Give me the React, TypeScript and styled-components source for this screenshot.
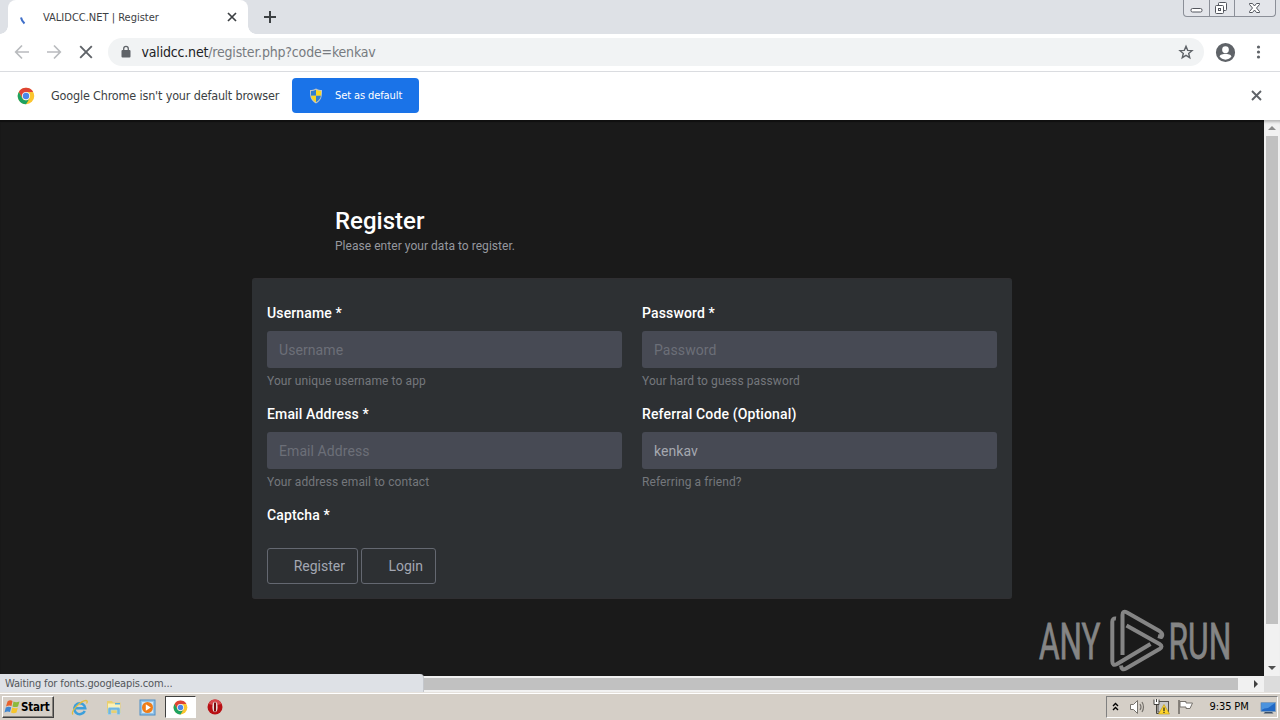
import React from "react";
import styled, { createGlobalStyle } from "styled-components";

const Global = createGlobalStyle`
  * { box-sizing: border-box; }
  html, body { margin: 0; padding: 0; }
  body { width: 1280px; height: 720px; overflow: hidden; background: #1a1a1a; }
  svg { display: block; flex: none; }
`;

const uiFont = `"DejaVu Sans Condensed", "DejaVu Sans", "Noto Sans", sans-serif`;

const Screen = styled.div`
  position: relative;
  display: flex;
  flex-direction: column;
  width: 1280px;
  height: 720px;
  overflow: hidden;
  font-family: "Noto Sans", sans-serif;
`;

/* Browser window */
const TabStrip = styled.div`
  display: flex;
  justify-content: space-between;
  height: 34px;
  padding-left: 8px;
  background: #dee1e6;
`;
const TabGroup = styled.div`
  display: flex;
  align-items: center;
`;
const Tab = styled.div`
  position: relative;
  display: flex;
  align-items: center;
  width: 240px;
  height: 34px;
  padding: 0 10px 0 12px;
  background: #fff;
  border-radius: 8px 8px 0 0;
  &::before, &::after {
    content: "";
    position: absolute;
    bottom: 0;
    width: 8px;
    height: 8px;
  }
  &::before { left: -8px; background: radial-gradient(circle at 0 0, #dee1e6 7.5px, #fff 8px); }
  &::after { right: -8px; background: radial-gradient(circle at 100% 0, #dee1e6 7.5px, #fff 8px); }
`;
const TabTitle = styled.span`
  flex: 1;
  margin-left: 7px;
  padding-top: 1px;
  font: 11px/16px ${uiFont};
  color: #3c4043;
  white-space: pre;
`;
const NewTab = styled.div`
  margin-left: 15px;
`;
const WindowButtons = styled.div`
  display: flex;
  width: 93px;
  height: 17px;
  margin-right: 4px;
  border: 1px solid #8b8f98;
  border-top: 0;
  border-radius: 0 0 4px 4px;
  background: #e3e5ea;
`;
const WindowButton = styled.div<{ $w: number }>`
  display: flex;
  justify-content: center;
  align-items: center;
  width: ${(p) => p.$w}px;
  & + & { border-left: 1px solid #8b8f98; }
`;
const Toolbar = styled.div`
  display: flex;
  align-items: center;
  height: 38px;
  padding: 0 13px 1px 14px;
  background: #fff;
  border-bottom: 1px solid #dadce0;
`;
const NavIcons = styled.div`
  display: flex;
  gap: 16px;
  width: 94px;
`;
const AddressBar = styled.div`
  display: flex;
  flex: none;
  align-items: center;
  width: 1096px;
  height: 28px;
  padding: 0 10px 0 12px;
  border-radius: 14px;
  background: #f1f3f4;
`;
const Url = styled.span`
  flex: 1;
  margin-left: 9.5px;
  font: 14px/20px ${uiFont};
  letter-spacing: -0.18px;
  color: #777b80;
  b { font-weight: 400; color: #202124; }
`;
const ToolbarEnd = styled.div`
  display: flex;
  align-items: center;
  gap: 14px;
  margin-left: 10px;
`;
const InfoBar = styled.div`
  display: flex;
  align-items: center;
  height: 48px;
  padding: 0 18.5px 1px 17px;
  background: #fff;
`;
const InfoText = styled.span`
  width: 241px;
  margin-left: 16px;
  font: 12.5px/18px ${uiFont};
  letter-spacing: -0.17px;
  color: #3c3f43;
  white-space: nowrap;
`;
const DefaultButton = styled.button`
  display: flex;
  align-items: center;
  gap: 11px;
  width: 127px;
  height: 35px;
  margin: 0 auto 0 0;
  padding: 0 0 0 16px;
  border: 0;
  border-radius: 4px;
  background: #1a73e8;
  color: #fff;
  font: 11px/16px ${uiFont};
  letter-spacing: -0.1px;
  white-space: nowrap;
`;

/* Web page */
const Viewport = styled.div`
  display: flex;
  height: 556px;
`;
const Page = styled.main`
  width: 1264px;
  padding-top: 86px;
  background: #1a1a1a;
  box-shadow: inset 0 2px 1px #101010;
  font-family: Roboto, sans-serif;
`;
const Heading = styled.h1`
  margin: 0 0 0 335px;
  font-size: 24px;
  font-weight: 500;
  line-height: 31px;
  color: #fff;
`;
const Intro = styled.p`
  margin: 0 0 0 335px;
  font-size: 12px;
  line-height: 18px;
  letter-spacing: 0.04px;
  color: #96989f;
`;
const Card = styled.section`
  width: 760px;
  height: 321px;
  margin: 23px 0 0 252px;
  padding: 24px 15px 0;
  border: 1px solid #302f32;
  border-width: 1px 0;
  border-radius: 3px;
  background: #2d3033;
`;
const Fields = styled.div`
  display: grid;
  grid-template-columns: 355px 355px;
  column-gap: 20px;
`;
const Field = styled.div`
  height: 101px;
`;
const Label = styled.label`
  display: block;
  height: 28px;
  font-size: 14px;
  font-weight: 500;
  line-height: 20px;
  letter-spacing: 0.14px;
  color: #fff;
`;
const Input = styled.input`
  display: block;
  width: 100%;
  height: 37px;
  padding: 1px 12px 0;
  border: 0;
  border-radius: 3px;
  background: #474a54;
  color: #a5a8b0;
  font: 14px Roboto, sans-serif;
  letter-spacing: 0.08px;
  &::placeholder { color: #6c6f78; opacity: 1; }
`;
const Help = styled.small`
  display: block;
  margin-top: 4px;
  font-size: 12px;
  line-height: 18px;
  letter-spacing: 0.1px;
  color: #74777c;
`;
const Actions = styled.div`
  display: flex;
  gap: 3px;
  margin-top: 15px;
`;
const Action = styled.button<{ $w: number }>`
  width: ${(p) => p.$w}px;
  height: 36px;
  padding: 0 12px 0 0;
  border: 1px solid #646871;
  border-radius: 3px;
  background: transparent;
  color: #a3a7b2;
  font: 14px Roboto, sans-serif;
  text-align: right;
`;
const VerticalScroll = styled.div`
  display: flex;
  flex-direction: column;
  align-items: center;
  justify-content: space-between;
  width: 16px;
  background: #f1f1f1;
  box-shadow: inset 0 4px 3px -2px #b5b5b5;
`;
const VerticalThumb = styled.div`
  width: 12px;
  height: 488px;
  margin-bottom: auto;
  background: #c1c1c1;
`;
const ArrowCell = styled.div`
  display: flex;
  align-items: center;
  justify-content: center;
  width: 16px;
  height: 16px;
`;
const BottomRow = styled.div`
  position: relative;
  display: flex;
  align-items: center;
  height: 16px;
  background: #f1f1f1;
`;
const HorizontalThumb = styled.div`
  width: 1222px;
  height: 12px;
  margin-left: 16px;
  background: #c1c1c1;
`;
const ScrollEnd = styled.div`
  display: flex;
  justify-content: flex-end;
  width: 26px;
`;
const Corner = styled.div`
  width: 16px;
  height: 16px;
  background: #dcdcdc;
`;
const StatusBubble = styled.div`
  position: absolute;
  left: 0;
  bottom: 0;
  width: 424px;
  height: 18px;
  padding-left: 5px;
  border-radius: 0 4px 0 0;
  background: #dee1e6;
  border-right: 1px solid #c4c7cc;
  color: #53565a;
  font: 11px/20px ${uiFont};
  letter-spacing: -0.14px;
`;
const Watermark = styled.div`
  position: absolute;
  left: 1036px;
  top: 606px;
`;

/* Taskbar */
const Taskbar = styled.footer`
  display: flex;
  align-items: center;
  height: 28px;
  padding: 1px 2px 0;
  background: #d5cfc7;
  border-top: 1px solid #e5e1dc;
  box-shadow: inset 0 1px 0 #fff;
`;
const StartButton = styled.button`
  display: flex;
  align-items: center;
  width: 52px;
  height: 22px;
  padding: 0 0 0 1px;
  border: 1px solid;
  border-color: #fff #404040 #404040 #fff;
  box-shadow: inset -1px -1px 0 #86827c;
  background: #d5cfc7;
  color: #000;
  font: bold 11.5px/16px ${uiFont};
  letter-spacing: -0.2px;
`;
const QuickLaunch = styled.div`
  display: flex;
  align-items: center;
  margin-left: 17px;
`;
const TaskIcon = styled.div<{ $active?: boolean; $w: number }>`
  display: flex;
  align-items: center;
  justify-content: center;
  width: ${(p) => p.$w}px;
  height: 22px;
  margin-left: ${(p) => (p.$active ? 9 : 0)}px;
  background: ${(p) => (p.$active ? "#fff" : "none")};
  border: ${(p) => (p.$active ? "1px solid" : "0")};
  border-color: #404040 #fff #fff #404040;
`;
const Tray = styled.div`
  display: flex;
  align-items: center;
  width: 172px;
  height: 22px;
  margin-left: auto;
  padding-left: 4px;
  border: 1px solid;
  border-color: #808080 #fff #fff #808080;
`;
const TrayIcons = styled.div`
  display: flex;
  align-items: center;
  gap: 7px;
`;
const Clock = styled.span`
  width: 50px;
  margin-left: 15.5px;
  color: #000;
  font: 11px/16px ${uiFont};
  letter-spacing: -0.1px;
  white-space: nowrap;
`;

const ChromeLogo = ({ size }: { size: number }) => (
  <svg width={size} height={size} viewBox="0 0 48 48">
    <circle cx="24" cy="24" r="22" fill="#fbc52f" />
    <path d="M4.900 13A22 22 0 0 1 43.100 13H24L14 29.800Z" fill="#de4335" />
    <path d="M4.900 13A22 22 0 0 0 24 46L34 29.800A11.500 11.500 0 0 1 14 29.800Z" fill="#1da261" />
    <circle cx="24" cy="24" r="11" fill="#f4f7fb" />
    <circle cx="24" cy="24" r="8.500" fill="#4a86e8" />
  </svg>
);
const Shield = () => (
  <svg width="16" height="16" viewBox="0 0 16 16">
    <path d="M8 .5C6 2 4 2 2 2c0 6 0 10 6 13.500C14 12 14 8 14 2 12 2 10 2 8 .5Z" fill="#c3c7c4" />
    <path d="M8 1.800C6.500 2.800 4.500 3 3 3v4.800h5Z" fill="#2f7fd0" />
    <path d="M8 1.800C9.500 2.800 11.500 3 13 3v4.800H8Z" fill="#f7d722" />
    <path d="M3.100 7.800H8v6.400C4.800 12.500 3.500 10.500 3.100 7.800Z" fill="#f7d722" />
    <path d="M12.900 7.800H8v6.400c3.100-1.700 4.500-3.700 4.900-6.400Z" fill="#2f7fd0" />
  </svg>
);

const fields = [
  { label: "Username *", placeholder: "Username", help: "Your unique username to app" },
  { label: "Password *", placeholder: "Password", help: "Your hard to guess password" },
  { label: "Email Address *", placeholder: "Email Address", help: "Your address email to contact" },
  { label: "Referral Code (Optional)", value: "kenkav", help: "Referring a friend?" },
];

export default function App() {
  return (
    <Screen>
      <Global />
      <TabStrip>
        <TabGroup>
          <Tab>
            <svg width="16" height="16" viewBox="0 0 16 16">
              <path d="M1 8.500Q1.500 11.500 4.500 14.500" fill="none" stroke="#3f6fc9" strokeWidth="2" />
            </svg>
            <TabTitle>VALIDCC.NET | Register</TabTitle>
            <svg width="12" height="12" viewBox="0 0 12 12">
              <path d="M2 2l8 8M10 2l-8 8" stroke="#3c4043" strokeWidth="1.700" />
            </svg>
          </Tab>
          <NewTab>
            <svg width="14" height="14" viewBox="0 0 14 14">
              <path d="M7 1v12M1 7h12" stroke="#3c4043" strokeWidth="2" />
            </svg>
          </NewTab>
        </TabGroup>
        <WindowButtons>
          <WindowButton $w={25}>
            <svg width="13" height="16" viewBox="0 0 13 16">
              <rect x="1" y="8.500" width="11" height="3.500" rx="1.500" fill="#fff" stroke="#53565e" />
            </svg>
          </WindowButton>
          <WindowButton $w={25}>
            <svg width="16" height="16" viewBox="0 0 16 16">
              <rect x="4.500" y="2.500" width="8" height="8" rx="1" fill="#fff" stroke="#53565e" />
              <rect x="1.500" y="5.500" width="8" height="8" rx="1" fill="#fff" stroke="#53565e" />
              <rect x="4.500" y="8.500" width="2" height="2" fill="#fff" stroke="#53565e" />
            </svg>
          </WindowButton>
          <WindowButton $w={41}>
            <svg width="14" height="16" viewBox="0 0 14 16">
              <path d="M1.500 3.500h3l2 2.500 2-2.500h3v1L8.500 8l3 3.500v1h-3l-2-2.500-2 2.500h-3v-1l3-3.500-3-3.500Z" fill="#fff" stroke="#53565e" />
            </svg>
          </WindowButton>
        </WindowButtons>
      </TabStrip>
      <Toolbar>
        <NavIcons>
          <svg width="16" height="16" viewBox="0 0 16 16">
            <path d="M15 8H2M8 1.500L1.700 8 8 14.500" fill="none" stroke="#b9bbbe" strokeWidth="1.700" />
          </svg>
          <svg width="16" height="16" viewBox="0 0 16 16">
            <path d="M1 8h13M8 1.500L14.300 8 8 14.500" fill="none" stroke="#b9bbbe" strokeWidth="1.700" />
          </svg>
          <svg width="16" height="16" viewBox="0 0 16 16">
            <path d="M2.200 2.200l11.600 11.600M13.800 2.200L2.200 13.800" stroke="#5f6368" strokeWidth="1.900" />
          </svg>
        </NavIcons>
        <AddressBar>
          <svg width="12" height="14" viewBox="0 0 12 14">
            <rect x="1.500" y="5" width="9" height="7.500" rx="1" fill="#5f6368" />
            <path d="M3.700 5.500V3.700a2.300 2.300 0 0 1 4.600 0v1.800" fill="none" stroke="#5f6368" strokeWidth="1.300" />
          </svg>
          <Url><b>validcc.net</b>/register.php?code=kenkav</Url>
          <svg width="16" height="16" viewBox="0 0 24 24">
            <path d="M12 3.500l2.500 6 6.500.5-5 4.200 1.600 6.300L12 17l-5.600 3.500L8 14.200 3 10l6.500-.5Z" fill="none" stroke="#5f6368" strokeWidth="2.100" />
          </svg>
        </AddressBar>
        <ToolbarEnd>
          <svg width="23" height="23" viewBox="0 0 24 24">
            <path fill="#5f6368" d="M12 2a10 10 0 1 0 0 20 10 10 0 0 0 0-20Zm0 3.500a3.500 3.500 0 1 1 0 7 3.500 3.500 0 0 1 0-7Zm0 14c-2.600 0-4.800-1.200-6.200-3.200.1-2 4.100-3 6.200-3s6.100 1 6.200 3c-1.400 2-3.600 3.200-6.200 3.200Z" />
          </svg>
          <svg width="16" height="16" viewBox="0 0 16 16" fill="#5f6368">
            <circle cx="7.500" cy="3" r="1.600" /><circle cx="7.500" cy="8" r="1.600" /><circle cx="7.500" cy="13" r="1.600" />
          </svg>
        </ToolbarEnd>
      </Toolbar>
      <InfoBar>
        <ChromeLogo size={18} />
        <InfoText>Google Chrome isn't your default browser</InfoText>
        <DefaultButton><Shield />Set as default</DefaultButton>
        <svg width="11" height="11" viewBox="0 0 11 11">
          <path d="M1 1l9 9M10 1l-9 9" stroke="#5f6368" strokeWidth="1.900" />
        </svg>
      </InfoBar>

      <Viewport>
        <Page>
          <Heading>Register</Heading>
          <Intro>Please enter your data to register.</Intro>
          <Card>
            <Fields>
              {fields.map((f) => (
                <Field key={f.label}>
                  <Label>{f.label}</Label>
                  <Input placeholder={f.placeholder} defaultValue={f.value} />
                  <Help>{f.help}</Help>
                </Field>
              ))}
            </Fields>
            <Label>Captcha *</Label>
            <Actions>
              <Action $w={91}>Register</Action>
              <Action $w={75}>Login</Action>
            </Actions>
          </Card>
        </Page>
        <VerticalScroll>
          <ArrowCell>
            <svg width="8" height="4" viewBox="0 0 8 4"><path d="M0 4L4 0l4 4Z" fill="#8b8b8b" /></svg>
          </ArrowCell>
          <VerticalThumb />
          <ArrowCell>
            <svg width="8" height="4" viewBox="0 0 8 4"><path d="M0 0l4 4 4-4Z" fill="#505050" /></svg>
          </ArrowCell>
        </VerticalScroll>
      </Viewport>
      <BottomRow>
        <HorizontalThumb />
        <ScrollEnd>
          <ArrowCell>
            <svg width="4" height="8" viewBox="0 0 4 8"><path d="M0 0l4 4-4 4Z" fill="#404040" /></svg>
          </ArrowCell>
        </ScrollEnd>
        <Corner />
        <StatusBubble>Waiting for fonts.googleapis.com...</StatusBubble>
      </BottomRow>

      <Taskbar>
        <StartButton>
          <svg width="17" height="16" viewBox="0 0 17 16">
            <path d="M3.500 2.500Q6 .5 8.500 2L7.500 7Q5 6 2 7.500Z" fill="#e8622c" />
            <path d="M9.500 2.500Q12 4 15.500 2.500L14 7.500Q11 8.500 8.500 7.500Z" fill="#8cba3c" />
            <path d="M1.800 8.500Q4.500 7 7.200 8.200L6 13Q3.500 12 .5 13.500Z" fill="#3f86d0" />
            <path d="M8.300 8.600Q11 9.800 13.800 8.700L12.500 13.500Q9.500 15 7 13.500Z" fill="#f6c52c" />
          </svg>
          Start
        </StartButton>
        <QuickLaunch>
          <TaskIcon $w={17}>
            <svg width="17" height="17" viewBox="0 0 17 17">
              <path d="M13.800 12A5.500 5.500 0 1 1 14.300 9.300H4.500" fill="none" stroke="#3c9fdb" strokeWidth="2.500" />
              <path d="M2 15.500C-1 12.500 10 1.500 15 1.500c1.500 0 1.500 1.500.5 3" fill="none" stroke="#e3bd3c" strokeWidth="1.300" />
            </svg>
          </TaskIcon>
          <TaskIcon $w={51}>
            <svg width="18" height="17" viewBox="0 0 18 17">
              <path d="M2 2h5l1 1.500h7.500V14H2Z" fill="#e9cf70" />
              <path d="M3 4.500h12V9H3Z" fill="#fbf1b7" />
              <path d="M10 4h5v1.500h-5Z" fill="#55aee0" />
              <path d="M3 15.500V10q0-1.500 1.500-1.500h9Q15 8.500 15 10v5.500h-3V11H6v4.500Z" fill="#70b6df" stroke="#acd8ed" strokeWidth=".6" />
            </svg>
          </TaskIcon>
          <TaskIcon $w={17}>
            <svg width="17" height="17" viewBox="0 0 17 17">
              <rect x="1" y="1" width="15" height="15" fill="#94c4e8" stroke="#4e8fc8" />
              <rect x="3" y="3" width="11" height="11" fill="#d2e8f7" />
              <circle cx="8.500" cy="8.500" r="5.500" fill="#ef7d18" />
              <path d="M6.800 5.300v6.400l5-3.200Z" fill="#fff" />
            </svg>
          </TaskIcon>
          <TaskIcon $w={31} $active><ChromeLogo size={15} /></TaskIcon>
          <TaskIcon $w={38}>
            <svg width="16" height="16" viewBox="0 0 16 16">
              <circle cx="8" cy="8" r="7.500" fill="#b81014" />
              <path d="M1.500 5A7 7 0 0 1 14.500 5Q8 7 1.500 5Z" fill="#d8474a" />
              <ellipse cx="8" cy="8" rx="2.600" ry="5.200" fill="#e6dcd8" />
              <rect x="7" y="3.500" width="2" height="9" fill="#7b0b0d" />
            </svg>
          </TaskIcon>
        </QuickLaunch>
        <Tray>
          <TrayIcons>
            <svg width="10" height="12" viewBox="0 0 10 12">
              <path d="M2 5l2.500-2.500L7 5M2 9l2.500-2.500L7 9" fill="none" stroke="#000" strokeWidth="1.400" />
            </svg>
            <svg width="18" height="16" viewBox="0 0 18 16">
              <path d="M2.500 5.500h3l4-4v13l-4-4h-3Z" fill="#fff" stroke="#77736d" />
              <path d="M12 5q2 3 0 6M14 3q3 5 0 10" fill="none" stroke="#77736d" strokeWidth="1.200" />
            </svg>
            <svg width="17" height="16" viewBox="0 0 17 16">
              <rect x="5" y="2.500" width="10.500" height="10.500" fill="#c9c9c9" stroke="#55524e" />
              <path d="M3.500 6v8.500h6" fill="none" stroke="#44423e" />
              <path d="M1 .5v5h5v-5M3.500 0v3" fill="#fff" stroke="#44423e" />
              <path d="M11 5.500l5.500 9.500h-11Z" fill="#ffd52b" stroke="#b99711" strokeWidth=".6" />
              <path d="M11 8.500v3.500M11 12.800v1.200" stroke="#222" strokeWidth="1.200" />
            </svg>
            <svg width="17" height="16" viewBox="0 0 17 16">
              <path d="M2 1v14" stroke="#6d6963" strokeWidth="1.500" />
              <path d="M3 2.500h6v1.500h6.500L13 9.500H9V8H3Z" fill="#fff" stroke="#77736d" />
            </svg>
          </TrayIcons>
          <Clock>9:35 PM</Clock>
          <svg width="17" height="15" viewBox="0 0 17 15">
            <path d="M1 2.500h14.500v9H1Z" fill="#2168c4" stroke="#7f9cba" />
            <path d="M1.500 3H15L8 8Q4 8 1.500 10Z" fill="#4b93de" />
            <path d="M5 12h7l1.500 1.500h-10Z" fill="#3c5068" />
          </svg>
        </Tray>
      </Taskbar>

      <Watermark>
        <svg width="230" height="70" viewBox="0 0 230 70">
          <g fill="#858585" stroke="#858585" strokeWidth="0.800" fontFamily="Roboto, sans-serif" fontSize="50">
            <text transform="translate(3 53) scale(.63 1)">ANY</text>
            <text transform="translate(132.500 53) scale(.635 1)">RUN</text>
          </g>
          <g fill="none" stroke="#858585" strokeWidth="4" strokeLinejoin="round">
            <path d="M80 12.500Q76.300 12 76.300 16V55Q76.300 60.500 81 58L114.500 38" />
            <path d="M86.500 49V9Q86.500 4 91 6.500L123.500 25Q127.500 28 125.500 31L122 30" />
            <path d="M85 59.500Q85.500 65 90 62.500L123.500 43Q127.500 40.500 123.500 38L90.500 19.500" />
          </g>
        </svg>
      </Watermark>
    </Screen>
  );
}
